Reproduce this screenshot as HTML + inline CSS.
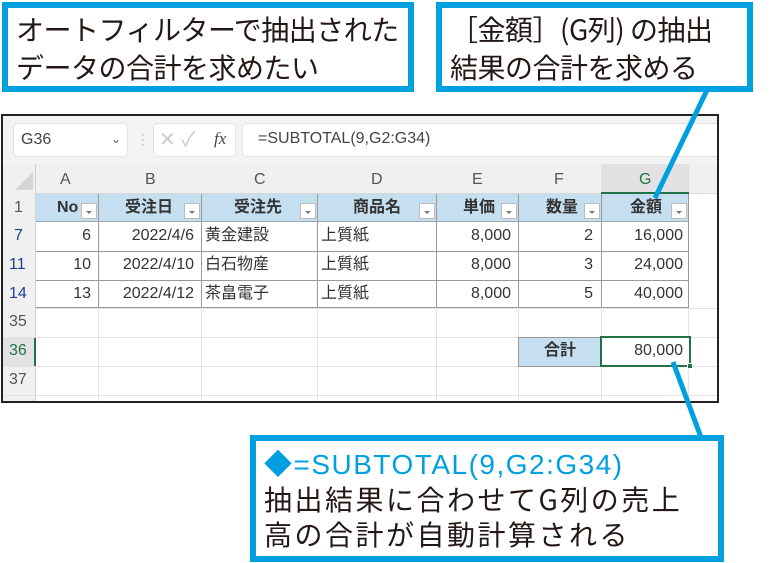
<!DOCTYPE html>
<html><head><meta charset="utf-8"><style>
*{margin:0;padding:0;box-sizing:border-box}
body{width:783px;height:563px;background:#fff;position:relative;overflow:hidden;font-family:"Liberation Sans","Noto Sans CJK JP",sans-serif}
.a{position:absolute}
.box{position:absolute;border:6px solid #00a0e0;background:#fff;color:#231815;font-family:"Noto Sans CJK JP",sans-serif;font-size:28px;line-height:38px;padding-left:8px;letter-spacing:-0.5px}
.frame{left:1px;top:114px;width:718px;height:289px;border:2px solid #222;background:#fff;overflow:hidden}
.c{position:absolute;font-size:16px;color:#333;line-height:28px;white-space:nowrap}
.hl{position:absolute;background:#d8d8d8}
.dd{position:absolute;width:16px;height:16px;border:1px solid #bbb;background:#fff}
.dd:after{content:"";position:absolute;left:4px;top:7px;border-left:3px solid transparent;border-right:3px solid transparent;border-top:3px solid #777}
</style></head><body>

<div class="frame a">
  <div class="a" style="left:0;top:0;width:718px;height:48px;background:#f3f3f3"></div>
  <div class="a" style="left:10px;top:7px;width:115px;height:34px;background:#fff;border-radius:5px;border:1px solid #e4e4e4"></div>
  <div class="c" style="left:18px;top:10px;font-size:16px;color:#444">G36</div>
  <div class="c" style="left:108px;top:9px;font-size:12px;color:#555">&#8964;</div>
  <div class="c" style="left:133px;top:9px;font-size:14px;color:#bbb">&#8942;</div>
  <div class="a" style="left:150px;top:7px;width:83px;height:34px;background:#fff;border-radius:5px;border:1px solid #e4e4e4"></div>
  <div class="c" style="left:156px;top:10px;font-size:20px;color:#ccc">✕ ✓</div>
  <div class="c" style="left:211px;top:9px;font-size:17px;color:#444;font-family:'Liberation Serif',serif;font-style:italic">fx</div>
  <div class="a" style="left:239px;top:7px;width:490px;height:34px;background:#fff;border-radius:5px;border:1px solid #e4e4e4"></div>
  <div class="c" style="left:255px;top:9px;font-size:16px;color:#444">=SUBTOTAL(9,G2:G34)</div>

  <div class="a" style="left:0;top:48px;width:718px;height:30px;background:#f0f0f0;border-bottom:1px solid #d8d8d8"></div>
  <div class="a" style="left:0;top:48px;width:33px;height:250px;background:#f0f0f0;border-right:1px solid #d0d0d0"></div>
  <div class="a" style="left:12px;top:56px;width:0;height:0;border-left:18px solid transparent;border-bottom:18px solid #d5d5d5"></div>
  <div class="a" style="left:598px;top:48px;width:88px;height:30px;background:#e2e2e2;border-bottom:2px solid #217346"></div>
  <div class="c" style="left:57px;top:50px;color:#555">A</div>
  <div class="c" style="left:142px;top:50px;color:#555">B</div>
  <div class="c" style="left:251px;top:50px;color:#555">C</div>
  <div class="c" style="left:368px;top:50px;color:#555">D</div>
  <div class="c" style="left:469px;top:50px;color:#555">E</div>
  <div class="c" style="left:551px;top:50px;color:#555">F</div>
  <div class="c" style="left:636px;top:50px;color:#217346">G</div>

  <div class="c" style="left:11px;top:78px;color:#555">1</div>
  <div class="c" style="left:11px;top:106px;color:#1f3f8f">7</div>
  <div class="c" style="left:6px;top:135px;color:#1f3f8f">11</div>
  <div class="c" style="left:6px;top:164px;color:#1f3f8f">14</div>
  <div class="c" style="left:6px;top:192px;color:#555">35</div>
  <div class="a" style="left:0;top:221px;width:33px;height:29px;background:#e2e2e2;border-right:2px solid #217346"></div>
  <div class="c" style="left:6px;top:221px;color:#217346">36</div>
  <div class="c" style="left:6px;top:250px;color:#555">37</div>

  <div class="hl" style="left:33px;top:192px;width:685px;height:1px;background:#e3e3e3"></div>
  <div class="hl" style="left:0;top:221px;width:718px;height:1px;background:#e3e3e3"></div>
  <div class="hl" style="left:0;top:250px;width:718px;height:1px;background:#e3e3e3"></div>
  <div class="hl" style="left:0;top:279px;width:718px;height:1px;background:#e3e3e3"></div>
  <div class="hl" style="left:95px;top:78px;width:1px;height:220px;background:#e3e3e3"></div>
  <div class="hl" style="left:198px;top:78px;width:1px;height:220px;background:#e3e3e3"></div>
  <div class="hl" style="left:314px;top:78px;width:1px;height:220px;background:#e3e3e3"></div>
  <div class="hl" style="left:433px;top:78px;width:1px;height:220px;background:#e3e3e3"></div>
  <div class="hl" style="left:515px;top:78px;width:1px;height:220px;background:#e3e3e3"></div>
  <div class="hl" style="left:598px;top:78px;width:1px;height:220px;background:#e3e3e3"></div>
  <div class="hl" style="left:685px;top:78px;width:1px;height:220px;background:#e3e3e3"></div>

  <div class="a" style="left:33px;top:78px;width:653px;height:28px;background:#c5dff0;border-bottom:1px solid #9aa"></div>
  <div class="a" style="left:33px;top:106px;width:653px;height:86px;border-bottom:1px solid #999"></div>
  <div class="hl" style="left:33px;top:135px;width:653px;height:1px;background:#999"></div>
  <div class="hl" style="left:33px;top:164px;width:653px;height:1px;background:#999"></div>
  <div class="hl" style="left:95px;top:78px;width:1px;height:114px;background:#999"></div>
  <div class="hl" style="left:198px;top:78px;width:1px;height:114px;background:#999"></div>
  <div class="hl" style="left:314px;top:78px;width:1px;height:114px;background:#999"></div>
  <div class="hl" style="left:433px;top:78px;width:1px;height:114px;background:#999"></div>
  <div class="hl" style="left:515px;top:78px;width:1px;height:114px;background:#999"></div>
  <div class="hl" style="left:598px;top:78px;width:1px;height:114px;background:#999"></div>
  <div class="hl" style="left:685px;top:78px;width:1px;height:114px;background:#999"></div>

  <div class="c" style="left:54px;top:78px;font-weight:bold">No</div>
  <div class="dd" style="left:78px;top:87px"></div>
  <div class="c" style="left:122px;top:78px;font-weight:bold">受注日</div>
  <div class="dd" style="left:181px;top:87px"></div>
  <div class="c" style="left:231px;top:78px;font-weight:bold">受注先</div>
  <div class="dd" style="left:297px;top:87px"></div>
  <div class="c" style="left:350px;top:78px;font-weight:bold">商品名</div>
  <div class="dd" style="left:416px;top:87px"></div>
  <div class="c" style="left:460px;top:78px;font-weight:bold">単価</div>
  <div class="dd" style="left:498px;top:87px"></div>
  <div class="c" style="left:543px;top:78px;font-weight:bold">数量</div>
  <div class="dd" style="left:581px;top:87px"></div>
  <div class="c" style="left:627px;top:78px;font-weight:bold">金額</div>
  <div class="dd" style="left:668px;top:87px"></div>

  <div class="c" style="right:626px;top:106px">6</div>
  <div class="c" style="right:523px;top:106px">2022/4/6</div>
  <div class="c" style="left:202px;top:106px">黄金建設</div>
  <div class="c" style="left:318px;top:106px">上質紙</div>
  <div class="c" style="right:206px;top:106px">8,000</div>
  <div class="c" style="right:124px;top:106px">2</div>
  <div class="c" style="right:34px;top:106px">16,000</div>

  <div class="c" style="right:626px;top:135px">10</div>
  <div class="c" style="right:523px;top:135px">2022/4/10</div>
  <div class="c" style="left:202px;top:135px">白石物産</div>
  <div class="c" style="left:318px;top:135px">上質紙</div>
  <div class="c" style="right:206px;top:135px">8,000</div>
  <div class="c" style="right:124px;top:135px">3</div>
  <div class="c" style="right:34px;top:135px">24,000</div>

  <div class="c" style="right:626px;top:164px">13</div>
  <div class="c" style="right:523px;top:164px">2022/4/12</div>
  <div class="c" style="left:202px;top:164px">茶畠電子</div>
  <div class="c" style="left:318px;top:164px">上質紙</div>
  <div class="c" style="right:206px;top:164px">8,000</div>
  <div class="c" style="right:124px;top:164px">5</div>
  <div class="c" style="right:34px;top:164px">40,000</div>

  <div class="a" style="left:515px;top:221px;width:84px;height:30px;background:#c5dff0;border:1px solid #999"></div>
  <div class="c" style="left:541px;top:221px;font-weight:bold">合計</div>
  <div class="a" style="left:597px;top:220px;width:91px;height:31px;border:2px solid #217346;background:#fff"></div>
  <div class="c" style="right:34px;top:221px">80,000</div>
  <div class="a" style="left:684px;top:247px;width:6px;height:6px;background:#217346;border:1px solid #fff"></div>
</div>

<svg class="a" style="left:0;top:0" width="783" height="563">
  <line x1="708" y1="88" x2="655" y2="198" stroke="#00a0e0" stroke-width="5"/>
  <line x1="673" y1="362" x2="702" y2="440" stroke="#00a0e0" stroke-width="5"/>
</svg>

<div class="box" style="left:2px;top:2px;width:412px;height:90px;padding-top:2px">オートフィルターで抽出された<br>データの合計を求めたい</div>
<div class="box" style="left:436px;top:2px;width:317px;height:90px;padding-top:2px">［金額］(G列) の抽出<br>結果の合計を求める</div>
<div class="box" style="left:250px;top:435px;width:474px;height:127px;padding-top:5px;line-height:35px;letter-spacing:2.5px"><span style="color:#00a0e0;font-family:'Liberation Sans','Noto Sans CJK JP',sans-serif;letter-spacing:1.5px">◆=SUBTOTAL(9,G2:G34)</span><br>抽出結果に合わせてG列の売上<br>高の合計が自動計算される</div>
</body></html>
